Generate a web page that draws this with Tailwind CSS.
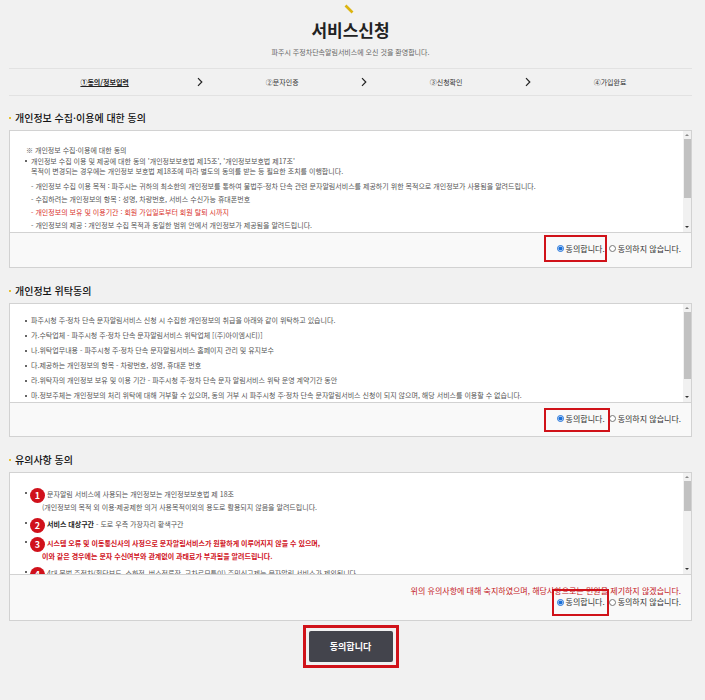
<!DOCTYPE html>
<html lang="ko">
<head>
    <meta charset="UTF-8">
    <meta name="viewport" content="width=device-width, initial-scale=1.0">
    <title>서비스신청</title>
    <script src="https://cdn.jsdelivr.net/npm/@tailwindcss/browser@4"></script>
</head>
<body class="min-h-screen bg-[#f1f1f1] pl-[9px] pr-[13px] font-['Noto_Sans_CJK_KR',sans-serif] text-[7px] leading-[12px] text-[#555]">
    <!-- Page title -->
    <header class="flex flex-col items-center pt-1">
        <svg class="mr-1 h-[10px] w-[10px]" viewBox="0 0 10 10" fill="none">
            <path d="M1.5 1.5 8.5 8.5" stroke="#dcb40f" stroke-width="2.6"/>
        </svg>
        <h1 class="mt-1 text-[17px] leading-[24px] font-bold text-[#222]">서비스신청</h1>
        <p class="mt-1 leading-[12px] text-[#666]">파주시 주정차단속알림서비스에 오신 것을 환영합니다.</p>
    </header>

    <!-- Steps -->
    <ol class="mt-[10px] grid grid-cols-[7fr_6fr_6fr_6fr] border-y border-[#e2e2e2] text-center leading-[26px] text-[#333]">
        <li class="relative font-bold text-[#222] underline">①동의/정보입력
            <svg class="absolute top-2 -right-[3px] h-[10px] w-[6px]" viewBox="0 0 6 10" fill="none"><path d="M1 1.2 4.8 5 1 8.8" stroke="#222" stroke-width="1.2"/></svg>
        </li>
        <li class="relative">②문자인증
            <svg class="absolute top-2 -right-[3px] h-[10px] w-[6px]" viewBox="0 0 6 10" fill="none"><path d="M1 1.2 4.8 5 1 8.8" stroke="#222" stroke-width="1.2"/></svg>
        </li>
        <li class="relative">③신청확인
            <svg class="absolute top-2 -right-[3px] h-[10px] w-[6px]" viewBox="0 0 6 10" fill="none"><path d="M1 1.2 4.8 5 1 8.8" stroke="#222" stroke-width="1.2"/></svg>
        </li>
        <li>④가입완료</li>
    </ol>

    <form>
        <!-- Collection and use -->
        <section class="mt-[14px]">
            <h2 class="flex items-center gap-1 text-[10px] leading-[16px] font-medium text-[#111]"><span class="h-[2px] w-[2px] bg-[#e8c030]"></span>개인정보 수집·이용에 대한 동의</h2>
            <div class="mt-1 border border-[#d2d2d2] bg-[#f9f9f9]">
                <div class="flex h-[102px] border-b border-[#d2d2d2] bg-white">
                    <div class="flex-1 overflow-hidden px-[15px] pt-[14px]">
                        <p class="pl-px leading-[11px]">※ 개인정보 수집·이용에 대한 동의</p>
                        <div class="flex leading-[10px]">
                            <span class="mt-1 mr-1 h-[2px] w-[2px] bg-[#666]"></span>
                            <p>개인정보 수집 이용 및 제공에 대한 동의 '개인정보보호법 제15조', '개인정보보호법 제17조'<br>목적이 변경되는 경우에는 개인정보 보호법 제18조에 따라 별도의 동의를 받는 등 필요한 조치를 이행합니다.</p>
                        </div>
                        <ul class="mt-1 pl-[6px] leading-[13px]">
                            <li>- 개인정보 수집 이용 목적 : 파주시는 귀하의 최소한의 개인정보를 통하여 불법주·정차 단속 관련 문자알림서비스를 제공하기 위한 목적으로 개인정보가 사용됨을 알려드립니다.</li>
                            <li>- 수집하려는 개인정보의 항목 : 성명, 차량번호, 서비스 수신가능 휴대폰번호</li>
                            <li class="text-[#d9332e]">- 개인정보의 보유 및 이용기간 : 회원 가입일로부터 회원 탈퇴 시까지</li>
                            <li>- 개인정보의 제공 : 개인정보 수집 목적과 동일한 범위 안에서 개인정보가 제공됨을 알려드립니다.</li>
                        </ul>
                    </div>
                    <div class="flex w-2 flex-col items-center bg-[#f1f1f1]">
                        <svg class="h-2 w-2" viewBox="0 0 8 8"><path d="M2 5 4 3 6 5Z" fill="#888"/></svg>
                        <div class="h-[59px] w-[7px] bg-[#c1c1c1]"></div>
                        <svg class="mt-auto h-2 w-2" viewBox="0 0 8 8"><path d="M2 2 4 4 6 2Z" fill="#333"/></svg>
                    </div>
                </div>
                <div class="flex h-[34px] items-center justify-end gap-1 pr-[10px] pb-[3px] text-[8px] text-[#333]">
                    <label class="relative flex items-center gap-[2px]">
                        <input type="radio" name="collect" checked class="h-[7px] w-[7px] accent-[#1a6fd8]">동의합니다.
                        <span class="pointer-events-none absolute -top-[8px] -left-[13px] h-[27px] w-[63px] border-2 border-[#d01219]"></span>
                    </label>
                    <label class="flex items-center gap-[2px]"><input type="radio" name="collect" class="h-[7px] w-[7px]">동의하지 않습니다.</label>
                </div>
            </div>
        </section>

        <!-- Consignment -->
        <section class="mt-[15px]">
            <h2 class="flex items-center gap-1 text-[10px] leading-[16px] font-medium text-[#111]"><span class="h-[2px] w-[2px] bg-[#e8c030]"></span>개인정보 위탁동의</h2>
            <div class="mt-1 border border-[#d2d2d2] bg-[#f9f9f9]">
                <div class="flex h-[99px] border-b border-[#d2d2d2] bg-white">
                    <ul class="flex-1 overflow-hidden px-[15px] pt-[9px] leading-[15px]">
                        <li class="flex"><span class="mt-[7px] mr-1 h-[2px] w-[2px] bg-[#666]"></span>파주시청 주·정차 단속 문자알림서비스 신청 시 수집한 개인정보의 취급을 아래와 같이 위탁하고 있습니다.</li>
                        <li class="flex"><span class="mt-[7px] mr-1 h-[2px] w-[2px] bg-[#666]"></span>가.수탁업체 - 파주시청 주·정차 단속 문자알림서비스 위탁업체 [(주)아이엠시티)]</li>
                        <li class="flex"><span class="mt-[7px] mr-1 h-[2px] w-[2px] bg-[#666]"></span>나.위탁업무내용 - 파주시청 주·정차 단속 문자알림서비스 홈페이지 관리 및 유지보수</li>
                        <li class="flex"><span class="mt-[7px] mr-1 h-[2px] w-[2px] bg-[#666]"></span>다.제공하는 개인정보의 항목 - 차량번호, 성명, 휴대폰 번호</li>
                        <li class="flex"><span class="mt-[7px] mr-1 h-[2px] w-[2px] bg-[#666]"></span>라.위탁자의 개인정보 보유 및 이용 기간 - 파주시청 주·정차 단속 문자 알림서비스 위탁 운영 계약기간 동안</li>
                        <li class="flex"><span class="mt-[7px] mr-1 h-[2px] w-[2px] bg-[#666]"></span>마.정보주체는 개인정보의 처리 위탁에 대해 거부할 수 있으며, 동의 거부 시 파주시청 주·정차 단속 문자알림서비스 신청이 되지 않으며, 해당 서비스를 이용할 수 없습니다.</li>
                    </ul>
                    <div class="flex w-2 flex-col items-center bg-[#f1f1f1]">
                        <svg class="h-2 w-2" viewBox="0 0 8 8"><path d="M2 5 4 3 6 5Z" fill="#888"/></svg>
                        <div class="h-[67px] w-[7px] bg-[#c1c1c1]"></div>
                        <svg class="mt-auto h-2 w-2" viewBox="0 0 8 8"><path d="M2 2 4 4 6 2Z" fill="#333"/></svg>
                    </div>
                </div>
                <div class="flex h-[33px] items-center justify-end gap-1 pr-[10px] pb-[2px] text-[8px] text-[#333]">
                    <label class="relative flex items-center gap-[2px]">
                        <input type="radio" name="consign" checked class="h-[7px] w-[7px] accent-[#1a6fd8]">동의합니다.
                        <span class="pointer-events-none absolute -top-[5px] -left-[13px] h-[24px] w-[66px] border-2 border-[#d01219]"></span>
                    </label>
                    <label class="flex items-center gap-[2px]"><input type="radio" name="consign" class="h-[7px] w-[7px]">동의하지 않습니다.</label>
                </div>
            </div>
        </section>

        <!-- Notices -->
        <section class="mt-[15px]">
            <h2 class="flex items-center gap-1 text-[10px] leading-[16px] font-medium text-[#111]"><span class="h-[2px] w-[2px] bg-[#e8c030]"></span>유의사항 동의</h2>
            <div class="mt-1 border border-[#d2d2d2] bg-[#f9f9f9]">
                <div class="flex h-[102px] border-b border-[#d2d2d2] bg-white">
                    <ul class="flex flex-1 flex-col gap-1 overflow-hidden px-[15px] pt-[15px]">
                        <li class="flex">
                            <span class="mt-1 mr-[3px] h-[2px] w-[2px] bg-[#666]"></span>
                            <span class="h-[15px] w-[15px] rounded-full bg-[#d0111b] text-center text-[9px] leading-[15px] font-bold text-white">1</span>
                            <p class="indent-[2px] leading-[13px]">문자알림 서비스에 사용되는 개인정보는 개인정보보호법 제 18조<br><span class="-ml-[3px]">(개인정보의 목적 외 이용·제공제한 의거 사용목적이외의 용도로 활용되지 않음을 알려드립니다.</span></p>
                        </li>
                        <li class="flex">
                            <span class="mt-1 mr-[3px] h-[2px] w-[2px] bg-[#666]"></span>
                            <span class="h-[15px] w-[15px] rounded-full bg-[#d0111b] text-center text-[9px] leading-[15px] font-bold text-white">2</span>
                            <p class="indent-[2px] leading-[13px]"><strong class="text-[#222]">서비스 대상구간</strong> - 도로 우측 가장자리 황색구간</p>
                        </li>
                        <li class="flex text-[#d0111b]">
                            <span class="mt-1 mr-[3px] h-[2px] w-[2px] bg-[#666]"></span>
                            <span class="h-[15px] w-[15px] rounded-full bg-[#d0111b] text-center text-[9px] leading-[15px] font-bold text-white">3</span>
                            <p class="indent-[2px] leading-[13px] font-bold">시스템 오류 및 이동통신사의 사정으로 문자알림서비스가 원활하게 이루어지지 않을 수 있으며,<br><span class="-ml-[3px]">이와 같은 경우에는 문자 수신여부와 관계없이 과태료가 부과됨을 알려드립니다.</span></p>
                        </li>
                        <li class="flex">
                            <span class="mt-1 mr-[3px] h-[2px] w-[2px] bg-[#666]"></span>
                            <span class="h-[15px] w-[15px] rounded-full bg-[#d0111b] text-center text-[9px] leading-[15px] font-bold text-white">4</span>
                            <p class="indent-[2px] leading-[13px]">4대 불법 주정차(횡단보도, 소화전, 버스정류장, 교차로모퉁이) 주민신고제는 문자알림 서비스가 제외됩니다.</p>
                        </li>
                    </ul>
                    <div class="flex w-2 flex-col items-center bg-[#f1f1f1]">
                        <svg class="h-2 w-2" viewBox="0 0 8 8"><path d="M2 5 4 3 6 5Z" fill="#888"/></svg>
                        <div class="h-[30px] w-[7px] bg-[#c1c1c1]"></div>
                        <svg class="mt-auto h-2 w-2" viewBox="0 0 8 8"><path d="M2 2 4 4 6 2Z" fill="#333"/></svg>
                    </div>
                </div>
                <div class="h-[45px] pt-[10px] pr-[10px] text-[8px] text-[#333]">
                    <p class="text-right leading-[11px] text-[#c4161c]">위의 유의사항에 대해 숙지하였으며, 해당사항으로는 민원을 제기하지 않겠습니다.</p>
                    <div class="flex items-center justify-end gap-1">
                        <label class="relative flex items-center gap-[2px]">
                            <input type="radio" name="notice" checked class="h-[7px] w-[7px] accent-[#1a6fd8]">동의합니다.
                            <span class="pointer-events-none absolute -top-[7px] -left-[5px] h-[27px] w-[57px] border-2 border-[#d01219]"></span>
                        </label>
                        <label class="flex items-center gap-[2px]"><input type="radio" name="notice" class="h-[7px] w-[7px]">동의하지 않습니다.</label>
                    </div>
                </div>
            </div>
        </section>

        <div class="mt-1 flex justify-center">
            <div class="border-[3px] border-[#d01219] p-[3px]">
                <button type="submit" class="h-[31px] w-[84px] rounded-[2px] bg-[#43444c] text-[9px] font-bold text-white">동의합니다</button>
            </div>
        </div>
    </form>
</body>
</html>
